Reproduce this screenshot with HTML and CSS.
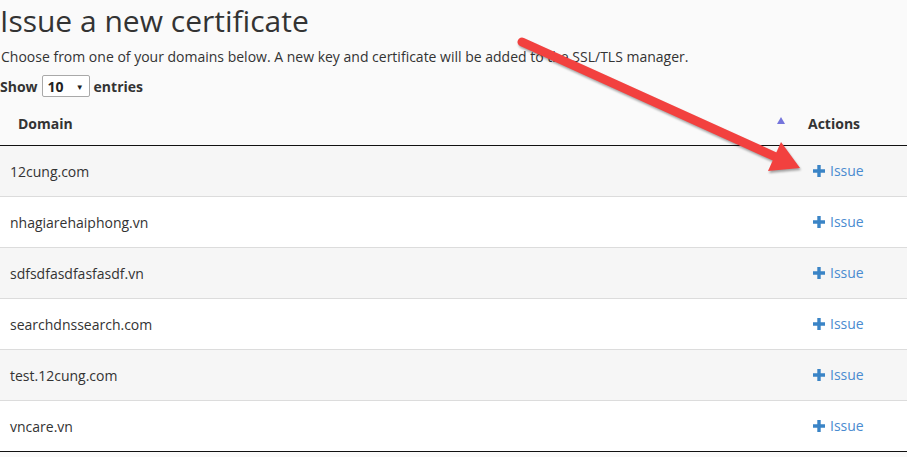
FILE: index.html
```html
<!DOCTYPE html>
<html lang="en">
<head>
  <meta charset="UTF-8">
  <title>Issue a new certificate</title>
  <link rel="stylesheet" href="styles.css">
</head>
<body>
  <div class="page">
    <h1>Issue a new certificate</h1>
    <p class="intro">Choose from one of your domains below. A new key and certificate will be added to the SSL/TLS manager.</p>

    <div class="length">
      <span>Show</span>
      <span class="select">10 <i>&#9660;</i></span>
      <span>entries</span>
    </div>

    <table class="domains">
      <thead>
        <tr>
          <th class="sorted">Domain</th>
          <th class="actions">Actions</th>
        </tr>
      </thead>
      <tbody>
        <tr><td>12cung.com</td><td class="actions"><a class="issue" href="#"><svg viewBox="0 0 12 12"><path d="M4.3 0h3.4v4.3H12v3.4H7.7V12H4.3V7.7H0V4.3h4.3z"/></svg>Issue</a></td></tr>
        <tr><td>nhagiarehaiphong.vn</td><td class="actions"><a class="issue" href="#"><svg viewBox="0 0 12 12"><path d="M4.3 0h3.4v4.3H12v3.4H7.7V12H4.3V7.7H0V4.3h4.3z"/></svg>Issue</a></td></tr>
        <tr><td>sdfsdfasdfasfasdf.vn</td><td class="actions"><a class="issue" href="#"><svg viewBox="0 0 12 12"><path d="M4.3 0h3.4v4.3H12v3.4H7.7V12H4.3V7.7H0V4.3h4.3z"/></svg>Issue</a></td></tr>
        <tr><td>searchdnssearch.com</td><td class="actions"><a class="issue" href="#"><svg viewBox="0 0 12 12"><path d="M4.3 0h3.4v4.3H12v3.4H7.7V12H4.3V7.7H0V4.3h4.3z"/></svg>Issue</a></td></tr>
        <tr><td>test.12cung.com</td><td class="actions"><a class="issue" href="#"><svg viewBox="0 0 12 12"><path d="M4.3 0h3.4v4.3H12v3.4H7.7V12H4.3V7.7H0V4.3h4.3z"/></svg>Issue</a></td></tr>
        <tr><td>vncare.vn</td><td class="actions"><a class="issue" href="#"><svg viewBox="0 0 12 12"><path d="M4.3 0h3.4v4.3H12v3.4H7.7V12H4.3V7.7H0V4.3h4.3z"/></svg>Issue</a></td></tr>
      </tbody>
    </table>

    <!-- red pointer drawn over the page -->
    <svg class="pointer" width="907" height="457" viewBox="0 0 907 457">
      <line x1="522" y1="42" x2="778" y2="158" stroke="#f2413f" stroke-width="9" stroke-linecap="round"/>
      <polygon points="800,168 768,171 781,142" fill="#f2413f"/>
    </svg>
  </div>
</body>
</html>
```

FILE: styles.css
```css
body {
  margin: 0;
  background: #fafafa;
  font-family: 'Open Sans', sans-serif;
  color: #333;
  font-size: 14px;
}
.page {
  position: relative;
  height: 457px;
  overflow: hidden;
}
h1 {
  margin: 0;
  padding-top: 2px;
  font-size: 30px;
  font-weight: 400;
  line-height: 38px;
  color: #333;
}
.intro {
  margin: 7px 0 0 1px;
  line-height: 20px;
}
.length {
  display: flex;
  align-items: center;
  gap: 4px;
  margin-top: 8px;
  font-weight: 700;
}
.select {
  display: inline-flex;
  justify-content: space-between;
  align-items: center;
  box-sizing: border-box;
  width: 48px;
  height: 22px;
  padding: 0 5px 0 5px;
  border: 1px solid #a9a9a9;
  border-radius: 2px;
  background: #fff;
  color: #222;
}
.select i {
  font-style: normal;
  font-size: 8px;
}
.domains {
  width: 100%;
  margin-top: 4px;
  border-collapse: collapse;
}
.domains th {
  position: relative;
  height: 44px;
  padding: 0 18px;
  text-align: left;
  font-weight: 700;
  color: #333;
  border-bottom: 1px solid #111;
}
.domains th.sorted::after {
  content: "";
  position: absolute;
  right: 13px;
  top: 16px;
  border-left: 4px solid transparent;
  border-right: 4px solid transparent;
  border-bottom: 7px solid #7575dc;
}
.domains th.actions {
  width: 89px;
  padding: 0 10px;
}
.domains td {
  height: 50px;
  padding: 0 10px;
  border-top: 1px solid #dcdcdc;
}
.domains tbody tr:nth-child(odd) {
  background: #f6f6f6;
}
.domains tbody tr:nth-child(even) {
  background: #fff;
}
.domains tbody tr:last-child td {
  border-bottom: 1px solid #111;
}
.domains td.actions {
  padding-left: 15px;
}
.issue {
  display: inline-flex;
  align-items: center;
  gap: 5px;
  color: #4a8bd0;
  text-decoration: none;
}
.issue svg {
  width: 12px;
  height: 12px;
  fill: #3a84c6;
}
.pointer {
  position: absolute;
  left: 0;
  top: 0;
  pointer-events: none;
  filter: drop-shadow(1px 2px 1px rgba(0, 0, 0, 0.35));
}
```
